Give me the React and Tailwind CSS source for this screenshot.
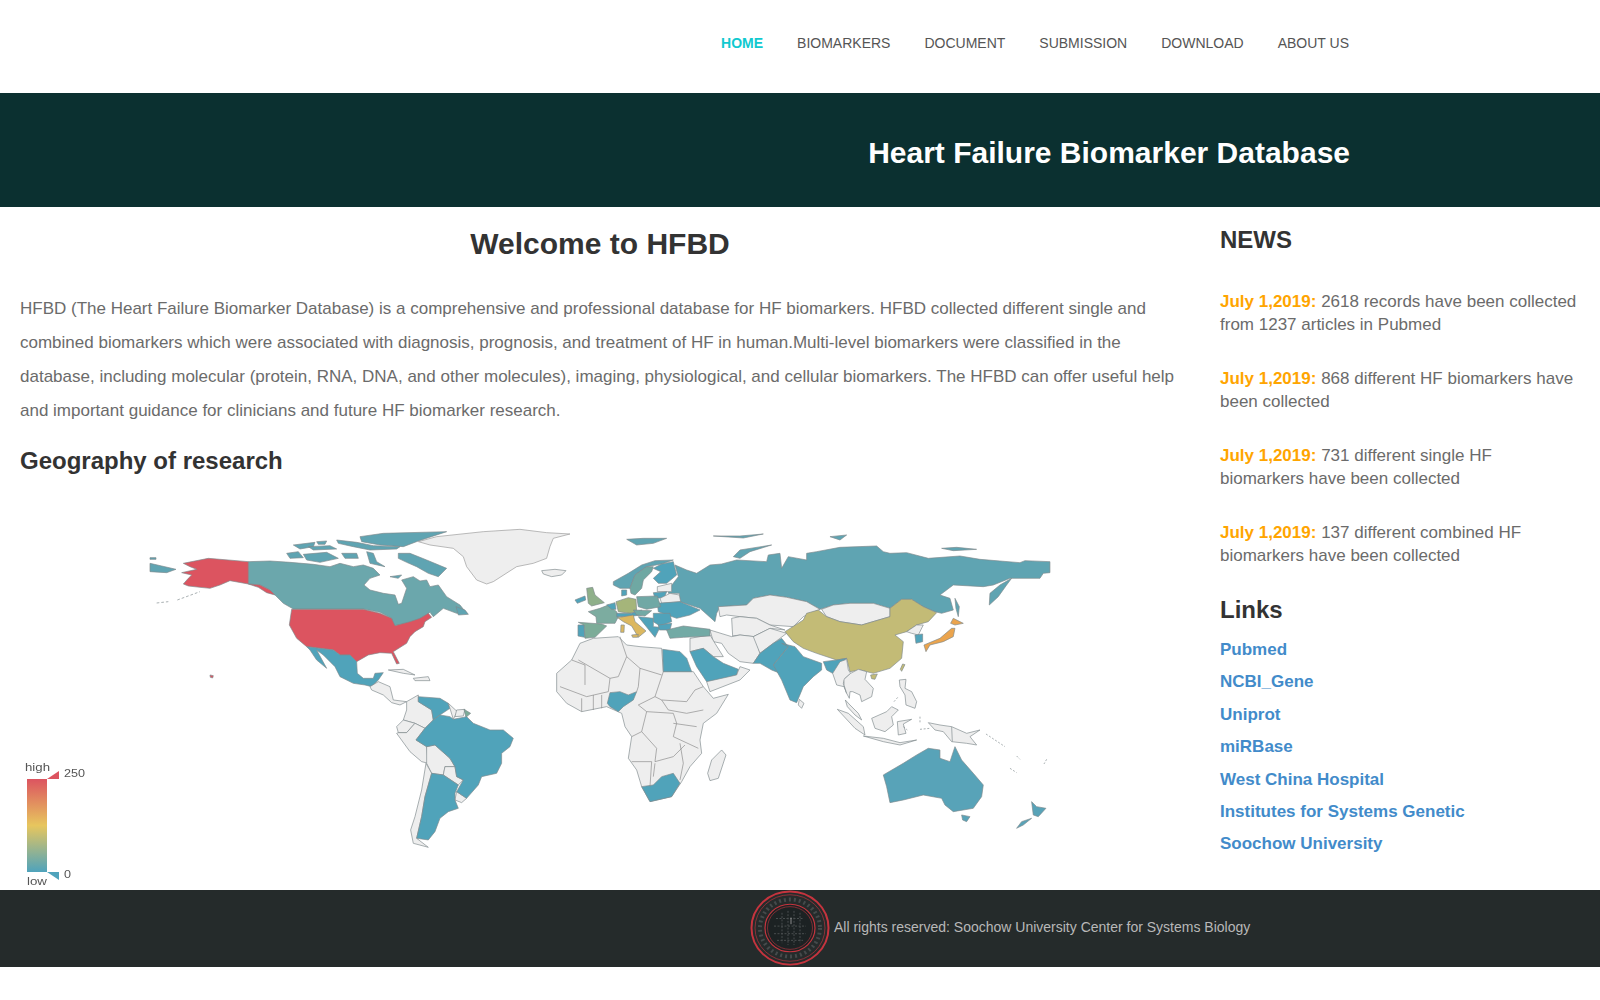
const navItems = ['HOME', 'BIOMARKERS', 'DOCUMENT', 'SUBMISSION', 'DOWNLOAD', 'ABOUT US']

const news = [
  '2618 records have been collected from 1237 articles in Pubmed',
  '868 different HF biomarkers have been collected',
  '731 different single HF biomarkers have been collected',
  '137 different combined HF biomarkers have been collected',
]

const links = ['Pubmed', 'NCBI_Gene', 'Uniprot', 'miRBase', 'West China Hospital', 'Institutes for Systems Genetic', 'Soochow University']

const GREY = '#eeeeee'
const BLUE = '#50a3ba'
const TEAL = '#5fa4b2'
const RED = '#dc5460'
const CANADA = '#6ba7ac'

// traced at 3x, each group has its own offset (see WorldMap)
const canada = [
  [CANADA, 'M-65,110 L0,108 L60,112 L130,118 L180,125 L210,115 L250,125 L280,120 L310,130 L330,150 L300,160 L282,180 L300,195 L340,205 L375,210 L385,238 L395,235 L410,190 L395,165 L430,155 L450,168 L470,165 L480,185 L505,180 L530,215 L570,240 L590,265 L560,265 L520,250 L490,275 L480,262 L440,290 L385,300 L370,302 L365,280 L330,262 L280,252 L70,252 L40,235 L15,210 L0,195 L-30,180 L-65,177 Z'],
  [TEAL, 'M385,85 L420,85 L470,105 L530,130 L505,155 L475,145 L440,125 L410,112 L385,100 Z'],
  [TEAL, 'M270,35 L340,25 L530,20 L445,48 L400,65 L330,60 L275,50 Z'],
  [TEAL, 'M200,45 L260,52 L310,62 L390,65 L380,72 L300,75 L250,65 L205,55 Z'],
  [TEAL, 'M70,60 L135,52 L130,65 L90,72 Z'],
  [TEAL, 'M140,50 L170,48 L165,58 L145,58 Z'],
  [TEAL, 'M100,88 L170,82 L205,100 L150,112 L110,105 Z'],
  [TEAL, 'M215,85 L260,85 L265,100 L225,100 Z'],
  [TEAL, 'M50,85 L85,80 L100,98 L60,100 Z'],
  [TEAL, 'M115,65 L180,62 L200,72 L130,75 Z'],
  [TEAL, 'M290,80 L310,85 L320,110 L345,125 L300,115 Z'],
  [TEAL, 'M360,155 L395,150 L385,160 Z'],
  [TEAL, 'M558,245 L585,255 L595,268 L565,270 Z'],
]

const west = [
  [RED, 'M190,160 L265,145 L385,155 L385,222 L330,212 L300,225 L270,235 L240,232 L205,228 L190,222 L205,205 L215,195 L185,188 L230,178 L210,170 Z'],
  [RED, 'M385,222 L420,225 L450,240 L465,255 L440,248 L415,232 Z'],
  [RED, 'M270,495 L280,497 L278,504 L271,502 Z'],
  [TEAL, 'M90,160 L125,168 L168,178 L140,188 L90,185 Z'],
  [TEAL, 'M90,143 L108,143 L108,148 L90,148 Z'],
  [RED, 'M515,298 L730,298 L780,310 L815,325 L825,347 L870,335 L900,325 L925,310 L935,322 L915,335 L910,350 L885,365 L870,380 L860,400 L820,425 L838,460 L830,462 L815,430 L780,428 L745,435 L710,455 L690,435 L660,435 L640,420 L560,410 L530,385 L508,345 Z'],
  [BLUE, 'M560,410 L640,420 L660,435 L690,435 L710,455 L712,490 L730,505 L760,505 L765,490 L790,488 L775,510 L755,530 L735,525 L700,520 L660,500 L645,470 L610,435 L590,420 L620,475 L590,450 L570,420 Z'],
  [GREY, 'M750,530 L775,515 L810,530 L820,570 L860,575 L840,585 L815,578 L790,555 L755,540 Z'],
  [GREY, 'M805,480 L850,478 L885,495 L850,490 Z'],
  [GREY, 'M880,505 L925,500 L930,512 L885,512 Z'],
  [GREY, 'M860,575 L895,555 L895,575 L935,600 L940,630 L915,655 L885,640 L850,630 L860,600 Z'],
  [GREY, 'M850,630 L885,640 L860,668 L835,668 L830,650 Z'],
  [GREY, 'M835,668 L860,668 L885,640 L915,655 L888,690 L920,710 L925,760 L905,755 L870,725 L830,670 Z'],
  [GREY, 'M920,710 L945,705 L990,745 L1005,770 L975,770 L970,795 L935,790 L920,760 Z'],
  [GREY, 'M975,770 L1005,770 L1010,800 L1030,810 L1015,825 L970,795 Z'],
  [GREY, 'M918,760 L935,790 L915,860 L905,920 L890,985 L925,1012 L880,1000 L872,960 L885,920 L905,840 Z'],
  [GREY, 'M1010,845 L1040,865 L1025,878 L1005,870 Z'],
  [BLUE, 'M895,560 L960,565 L985,580 L990,595 L960,615 L940,630 L935,600 L895,575 Z'],
  [GREY, 'M985,580 L1012,605 L1000,628 L990,595 Z'],
  [GREY, 'M1010,600 L1035,598 L1030,618 L1005,620 Z'],
  ['#7cac98', 'M1032,598 L1052,610 L1038,622 Z'],
  [BLUE, 'M915,655 L940,630 L960,615 L990,620 L1000,628 L1040,620 L1060,640 L1110,660 L1150,660 L1180,685 L1170,710 L1145,730 L1145,760 L1130,790 L1085,800 L1075,825 L1040,865 L1010,845 L1030,810 L1010,800 L1005,770 L990,745 L945,705 L920,710 L888,690 Z'],
  [BLUE, 'M935,790 L970,795 L1015,825 L1005,850 L1005,870 L1015,895 L985,905 L960,925 L945,965 L925,990 L890,985 L905,920 L915,860 Z'],
]

const east = [
  [GREY, 'M50,490 L95,450 L120,400 L160,385 L235,380 L260,405 L300,410 L365,415 L370,485 L460,485 L490,530 L520,565 L565,553 L530,610 L490,640 L480,690 L485,730 L450,770 L425,815 L395,860 L330,875 L305,830 L290,780 L265,745 L275,680 L255,650 L245,610 L200,590 L125,605 L80,580 L50,545 Z'],
  [BLUE, 'M210,548 L240,545 L265,555 L290,545 L280,570 L250,590 L235,605 L210,590 L202,580 Z'],
  [BLUE, 'M368,418 L420,425 L440,445 L455,485 L370,485 Z'],
  [BLUE, 'M305,830 L340,825 L365,800 L400,790 L420,820 L395,860 L330,875 Z'],
  [GREY, 'M545,720 L558,735 L535,805 L510,812 L503,790 L515,750 Z'],
  [GREY, 'M5,182 L45,178 L78,182 L65,195 L35,200 L10,192 Z'],
  [TEAL, 'M388,235 L415,200 L405,165 L440,180 L470,190 L510,165 L545,162 L590,150 L680,155 L685,135 L720,130 L725,175 L745,140 L800,150 L800,130 L830,125 L900,112 L1010,108 L1030,125 L1050,130 L1100,128 L1165,145 L1260,138 L1320,148 L1440,158 L1455,152 L1530,155 L1530,188 L1510,190 L1500,205 L1440,205 L1410,205 L1360,225 L1330,230 L1240,225 L1200,255 L1230,265 L1240,300 L1205,310 L1185,305 L1150,290 L1115,268 L1085,268 L1050,295 L1000,280 L930,280 L880,285 L840,298 L800,275 L740,262 L690,255 L640,265 L620,285 L540,290 L530,310 L525,335 L480,295 L420,275 L418,250 L385,250 Z'],
  [TEAL, 'M1415,205 L1380,225 L1350,250 L1348,285 L1375,260 L1400,225 Z'],
  [TEAL, 'M1245,265 L1258,290 L1255,320 L1248,295 Z'],
  [TEAL, 'M580,140 L600,120 L695,105 L630,125 L600,145 Z'],
  [TEAL, 'M260,88 L310,85 L380,85 L340,100 L290,105 Z'],
  [TEAL, 'M870,80 L920,75 L900,90 Z'],
  [TEAL, 'M520,78 L600,78 L670,72 L610,84 Z'],
  [TEAL, 'M1205,115 L1250,112 L1310,118 L1240,122 Z'],
  [GREY, 'M535,290 L620,285 L640,265 L690,255 L740,262 L800,275 L840,298 L790,320 L760,350 L690,345 L650,325 L600,320 L560,315 L540,320 Z'],
  [GREY, 'M575,325 L600,320 L650,325 L690,345 L735,360 L690,355 L640,380 L600,375 L578,378 Z'],
  [GREY, 'M845,298 L880,285 L930,280 L1000,280 L1050,295 L1050,320 L965,345 L900,335 L860,320 Z'],
  ['#c3bb76', 'M735,365 L790,330 L800,310 L835,300 L860,320 L900,335 L965,345 L1050,320 L1050,295 L1085,268 L1115,268 L1150,290 L1190,308 L1165,335 L1130,345 L1100,365 L1065,375 L1090,395 L1085,445 L1050,475 L1000,490 L960,480 L930,485 L920,445 L890,450 L830,430 L790,415 L760,395 Z'],
  ['#c3bb76', 'M992,495 L1012,492 L1005,508 L995,506 Z'],
  ['#c3bb76', 'M1088,462 L1095,464 L1085,484 L1081,478 Z'],
  [GREY, 'M1100,365 L1130,345 L1150,345 L1135,375 L1115,370 Z'],
  [BLUE, 'M1125,375 L1148,372 L1148,395 L1128,400 Z'],
  ['#eba44d', 'M1152,405 L1200,385 L1235,355 L1245,355 L1240,380 L1210,395 L1170,405 L1158,425 Z'],
  ['#eba44d', 'M1240,325 L1270,340 L1245,345 L1232,340 Z'],
  [GREY, 'M510,360 L575,380 L600,375 L645,380 L660,430 L640,460 L600,455 L565,430 L545,400 L520,395 Z'],
  [GREY, 'M450,385 L510,375 L525,400 L550,440 L520,440 L490,415 L450,425 Z'],
  [GREY, 'M640,380 L690,355 L740,370 L700,400 L660,430 Z'],
  [BLUE, 'M640,460 L660,430 L700,400 L725,385 L745,410 L700,465 L720,490 L695,480 L660,460 Z'],
  [BLUE, 'M725,400 L765,410 L790,440 L845,460 L845,480 L820,500 L790,530 L770,578 L750,570 L725,510 L700,465 L745,410 Z'],
  [BLUE, 'M850,455 L890,450 L920,445 L895,470 L878,490 L860,480 Z'],
  [GREY, 'M778,568 L792,580 L785,595 L775,585 Z'],
  [BLUE, 'M450,425 L490,415 L520,440 L550,460 L595,478 L590,495 L540,510 L500,515 L470,470 Z'],
  [GREY, 'M500,515 L590,495 L600,470 L630,480 L600,510 L510,545 Z'],
  ['#58a3b8', 'M1030,795 L1090,760 L1130,735 L1165,715 L1200,720 L1200,745 L1230,755 L1245,710 L1265,750 L1300,790 L1330,825 L1325,860 L1300,895 L1240,905 L1215,885 L1205,865 L1150,855 L1090,870 L1050,878 L1040,830 Z'],
  ['#58a3b8', 'M1265,915 L1290,920 L1280,935 L1268,930 Z'],
  ['#58a3b8', 'M1475,875 L1490,890 L1518,895 L1495,920 L1480,915 Z'],
  ['#58a3b8', 'M1475,925 L1450,945 L1430,955 L1445,935 Z'],
]

const europe = [
  [TEAL, 'M130,95 L175,70 L215,45 L255,32 L310,30 L275,42 L230,50 L195,75 L180,115 L150,115 L130,105 Z'],
  ['#6fa8a3', 'M180,115 L195,75 L230,50 L250,50 L245,65 L220,90 L215,115 L195,135 L183,130 Z'],
  [BLUE, 'M250,55 L275,42 L310,35 L320,75 L290,100 L265,100 L250,85 L272,65 Z'],
  [GREY, 'M262,110 L305,100 L305,125 L262,125 Z'],
  [BLUE, 'M250,128 L290,125 L283,143 L255,145 Z'],
  [GREY, 'M270,145 L300,130 L328,135 L332,155 L275,160 Z'],
  [BLUE, 'M262,160 L330,155 L390,180 L360,195 L320,205 L265,185 Z'],
  ['#70a8a5', 'M200,140 L262,138 L272,170 L230,178 L205,170 Z'],
  ['#a5b57a', 'M138,155 L175,143 L198,148 L200,185 L180,190 L145,185 Z'],
  [BLUE, 'M155,120 L170,120 L170,135 L155,138 Z'],
  ['#8fb08a', 'M50,115 L68,112 L75,135 L103,158 L65,168 L55,160 Z'],
  [BLUE, 'M15,150 L45,138 L47,150 L22,160 Z'],
  ['#7caca0', 'M55,185 L90,175 L115,165 L140,185 L145,200 L135,220 L80,220 L78,200 Z'],
  [BLUE, 'M110,165 L135,158 L138,178 L125,178 Z'],
  ['#7cac98', 'M25,217 L95,222 L110,228 L75,262 L45,265 L42,225 Z'],
  [BLUE, 'M24,225 L42,225 L44,262 L24,258 Z'],
  [BLUE, 'M140,190 L185,190 L215,180 L215,195 L170,200 L140,200 Z'],
  ['#dcb860', 'M143,203 L190,195 L195,215 L228,243 L205,262 L185,228 L160,215 Z'],
  ['#dcb860', 'M153,225 L163,225 L162,247 L152,247 Z'],
  ['#dcb860', 'M185,255 L205,253 L203,262 L188,262 Z'],
  ['#72a9a5', 'M190,180 L245,182 L225,198 L200,195 Z'],
  [BLUE, 'M250,190 L300,190 L305,215 L270,228 L250,215 Z'],
  [BLUE, 'M205,200 L250,205 L250,230 L270,232 L255,262 L245,250 L225,225 Z'],
  [BLUE, 'M265,225 L305,220 L300,240 L268,240 Z'],
  ['#72aaa5', 'M290,240 L340,228 L420,238 L420,258 L340,262 L300,265 Z'],
]

const seAsia = [
  [GREY, 'M38,70 L60,35 L80,28 L85,60 L92,70 L75,85 L70,100 L80,130 L72,110 L50,105 Z'],
  [GREY, 'M72,88 L92,70 L115,58 L140,65 L135,88 L160,115 L155,140 L125,155 L120,135 L98,125 L90,125 L88,145 L80,130 L72,105 Z'],
  [GREY, 'M76,150 L90,165 L115,190 L125,210 L105,195 L82,170 Z'],
  [GREY, 'M52,178 L85,190 L130,230 L135,255 L105,235 Z'],
  [GREY, 'M130,258 L190,265 L240,278 L290,270 L240,285 L190,275 Z'],
  [GREY, 'M155,205 L200,185 L215,170 L235,180 L215,200 L220,225 L195,245 L165,235 Z'],
  [GREY, 'M232,215 L275,208 L250,222 L258,250 L235,255 Z'],
  [GREY, 'M238,90 L258,88 L255,115 L275,125 L290,155 L285,175 L258,165 L255,135 L240,110 Z'],
  [GREY, 'M325,218 L360,225 L395,230 L440,250 L480,240 L450,260 L470,285 L440,280 L395,275 L370,245 L345,240 Z'],
]

const africaBorders = 'M95,450 L135,465 L135,525 M115,450 L210,505 M240,380 L260,440 L235,500 L210,505 M260,440 L300,475 L365,495 M300,475 L295,530 L290,545 M210,505 L205,545 L140,560 L60,530 M370,485 L345,560 L365,570 L440,575 L465,540 L490,530 M295,585 L345,560 M365,570 L385,600 L440,610 L490,600 M295,585 L320,605 L400,610 L410,640 L400,680 L475,715 M320,605 L305,665 L275,680 M305,665 L350,715 L345,755 L400,740 L435,705 M275,755 L335,755 L330,830 M345,760 L340,800 M420,700 L430,760 L420,810 M400,640 L470,650 M125,605 L125,565 M160,600 L160,555 M185,595 L185,555'

function Countries({ items, x, y }) {
  return (
    <g transform={`translate(${x} ${y}) scale(0.3333)`} stroke="#7f8a8c" strokeWidth="2" strokeLinejoin="round">
      {items.map(([fill, d], i) => <path key={i} d={d} fill={fill} />)}
    </g>
  )
}

function WorldMap() {
  const label = { fontSize: 10, fill: '#555', fontFamily: 'Liberation Sans, sans-serif', lengthAdjust: 'spacingAndGlyphs' }
  return (
    <svg viewBox="20 500 1160 390" className="block mt-[26px] w-[1160px] h-[390px] blur-[0.4px]">
      <defs>
        <linearGradient id="legend" x1="0" y1="0" x2="0" y2="1">
          <stop offset="0" stopColor="#dc5460" />
          <stop offset="0.5" stopColor="#e7c65e" />
          <stop offset="1" stopColor="#4fa3bc" />
        </linearGradient>
      </defs>
      <Countries items={canada} x={270} y={525} />
      <Countries items={west} x={120} y={510} />
      <g transform="translate(120 510) scale(0.3333)" stroke="#7f8a8c" strokeWidth="2">
        <path d="M895,95 L950,80 L1090,65 L1200,58 L1280,68 L1350,72 L1300,85 L1290,110 L1280,145 L1240,160 L1190,170 L1120,215 L1100,222 L1070,210 L1040,170 L1030,140 L1000,115 L930,105 Z" fill={GREY} stroke="#999" />
        <path d="M110,279 L145,275 M172,270 L240,245" fill="none" strokeDasharray="8 6" />
      </g>
      <Countries items={east} x={540} y={510} />
      <Countries items={europe} x={570} y={550} />
      <Countries items={seAsia} x={820} y={650} />
      <g transform="translate(540 510) scale(0.3333)" stroke="#8a8a8a" strokeWidth="2" fill="none">
        <path d={africaBorders} />
      </g>
      <g transform="translate(820 650) scale(0.3333)" stroke="#7f8a8c" strokeWidth="2" fill="none">
        <path d="M395,230 L397,275" />
        <path d="M498,252 L555,290 M590,318 L600,328 M570,355 L590,368 M680,328 L672,342 M222,155 L235,140 M300,200 V220 M300,238 L330,235 M250,230 L262,240" strokeDasharray="6 5" />
      </g>
      <rect x="27" y="779" width="20" height="93" fill="url(#legend)" />
      <path d="M47,779 L59,771 L59,779 Z" fill="#dc5460" />
      <path d="M47,872 L59,872 L59,880 Z" fill="#4fa3bc" />
      <text x="25" y="771" textLength="25" {...label}>high</text>
      <text x="64" y="777" textLength="21" {...label}>250</text>
      <text x="64" y="878" textLength="7" {...label}>0</text>
      <text x="27" y="885" textLength="20" {...label}>low</text>
    </svg>
  )
}

function SealLogo() {
  return (
    <svg viewBox="0 0 80 80" preserveAspectRatio="none" className="w-[80px] h-[76px] shrink-0">
      <circle cx="40" cy="40" r="38.5" fill="#252b2b" stroke="#c5343e" strokeWidth="2" />
      <circle cx="40" cy="40" r="35" fill="none" stroke="#a8343c" strokeWidth="0.8" />
      <circle cx="40" cy="40" r="30" fill="none" stroke="#454a4b" strokeWidth="4" strokeDasharray="2 3" />
      <circle cx="40" cy="40" r="25" fill="#1c2223" stroke="#c5343e" strokeWidth="1.2" />
      <circle cx="40" cy="40" r="22.5" fill="none" stroke="#a8343c" strokeWidth="0.7" />
      <path d="M26,30 H54 M24,38 H56 M24,46 H56 M27,53 H53 M32,24 V56 M38,22 V58 M44,22 V58 M50,24 V56" stroke="#4a4f50" strokeWidth="1" strokeDasharray="2 1.5" fill="none" />
      <path d="M41,29 V36" stroke="#aaa" strokeWidth="0.8" />
    </svg>
  )
}

export default function App() {
  return (
    <div className="min-h-[1000px] bg-white font-['Liberation_Sans',Arial,sans-serif]">
      <nav className="h-[93px] flex items-center justify-end pr-[234px] pb-[7px]">
        {navItems.map((item, i) => (
          <a key={item} className={i === 0 ? 'px-[17px] text-sm font-bold text-[#10c9cf]' : 'px-[17px] text-sm text-[#555555]'}>
            {item}
          </a>
        ))}
      </nav>

      <header className="h-[114px] bg-[#0b3030] flex items-center justify-end pr-[250px] pt-[5px]">
        <h1 className="text-3xl font-bold text-white">Heart Failure Biomarker Database</h1>
      </header>

      <main className="flex h-[683px]">
        <section className="w-[1200px] px-5">
          <h2 className="mt-[20px] text-center text-3xl leading-[34px] font-bold text-[#333333]">Welcome to HFBD</h2>
          <p className="mt-[31px] text-[17px] leading-[34px] text-[#6b6b6b]">
            HFBD (The Heart Failure Biomarker Database) is a comprehensive and professional database for HF biomarkers. HFBD collected different single and combined biomarkers which were associated with diagnosis, prognosis, and treatment of HF in human.Multi-level biomarkers were classified in the database, including molecular (protein, RNA, DNA, and other molecules), imaging, physiological, and cellular biomarkers. The HFBD can offer useful help and important guidance for clinicians and future HF biomarker research.
          </p>
          <h3 className="mt-[19px] text-2xl leading-[27px] font-bold text-[#333333]">Geography of research</h3>
          <WorldMap />
        </section>

        <aside className="w-[400px] px-5">
          <h3 className="mt-[19px] text-2xl leading-[27px] font-bold text-[#333333]">NEWS</h3>
          <div className="mt-[38px]">
            {news.map((text, i) => (
              <p key={i} className="mb-[31.6px] text-[17px] leading-[22.7px] text-[#6b6b6b]">
                <span className="font-bold text-[#ffa500]">July 1,2019:</span> {text}
              </p>
            ))}
          </div>
          <h3 className="mt-[-3px] text-2xl leading-[27px] font-bold text-[#333333]">Links</h3>
          <ul className="mt-[11px]">
            {links.map((link) => (
              <li key={link} className="h-[32.4px] text-[17px] leading-[32.4px] font-bold text-[#428bca]">{link}</li>
            ))}
          </ul>
        </aside>
      </main>

      <footer className="h-[77px] bg-[#252b2b] flex items-center pl-[750px] gap-[4px]">
        <div className="mb-[2px]"><SealLogo /></div>
        <span className="mb-[4px] text-sm text-[#b8b8b8]">All rights reserved: Soochow University Center for Systems Biology</span>
      </footer>
    </div>
  )
}
